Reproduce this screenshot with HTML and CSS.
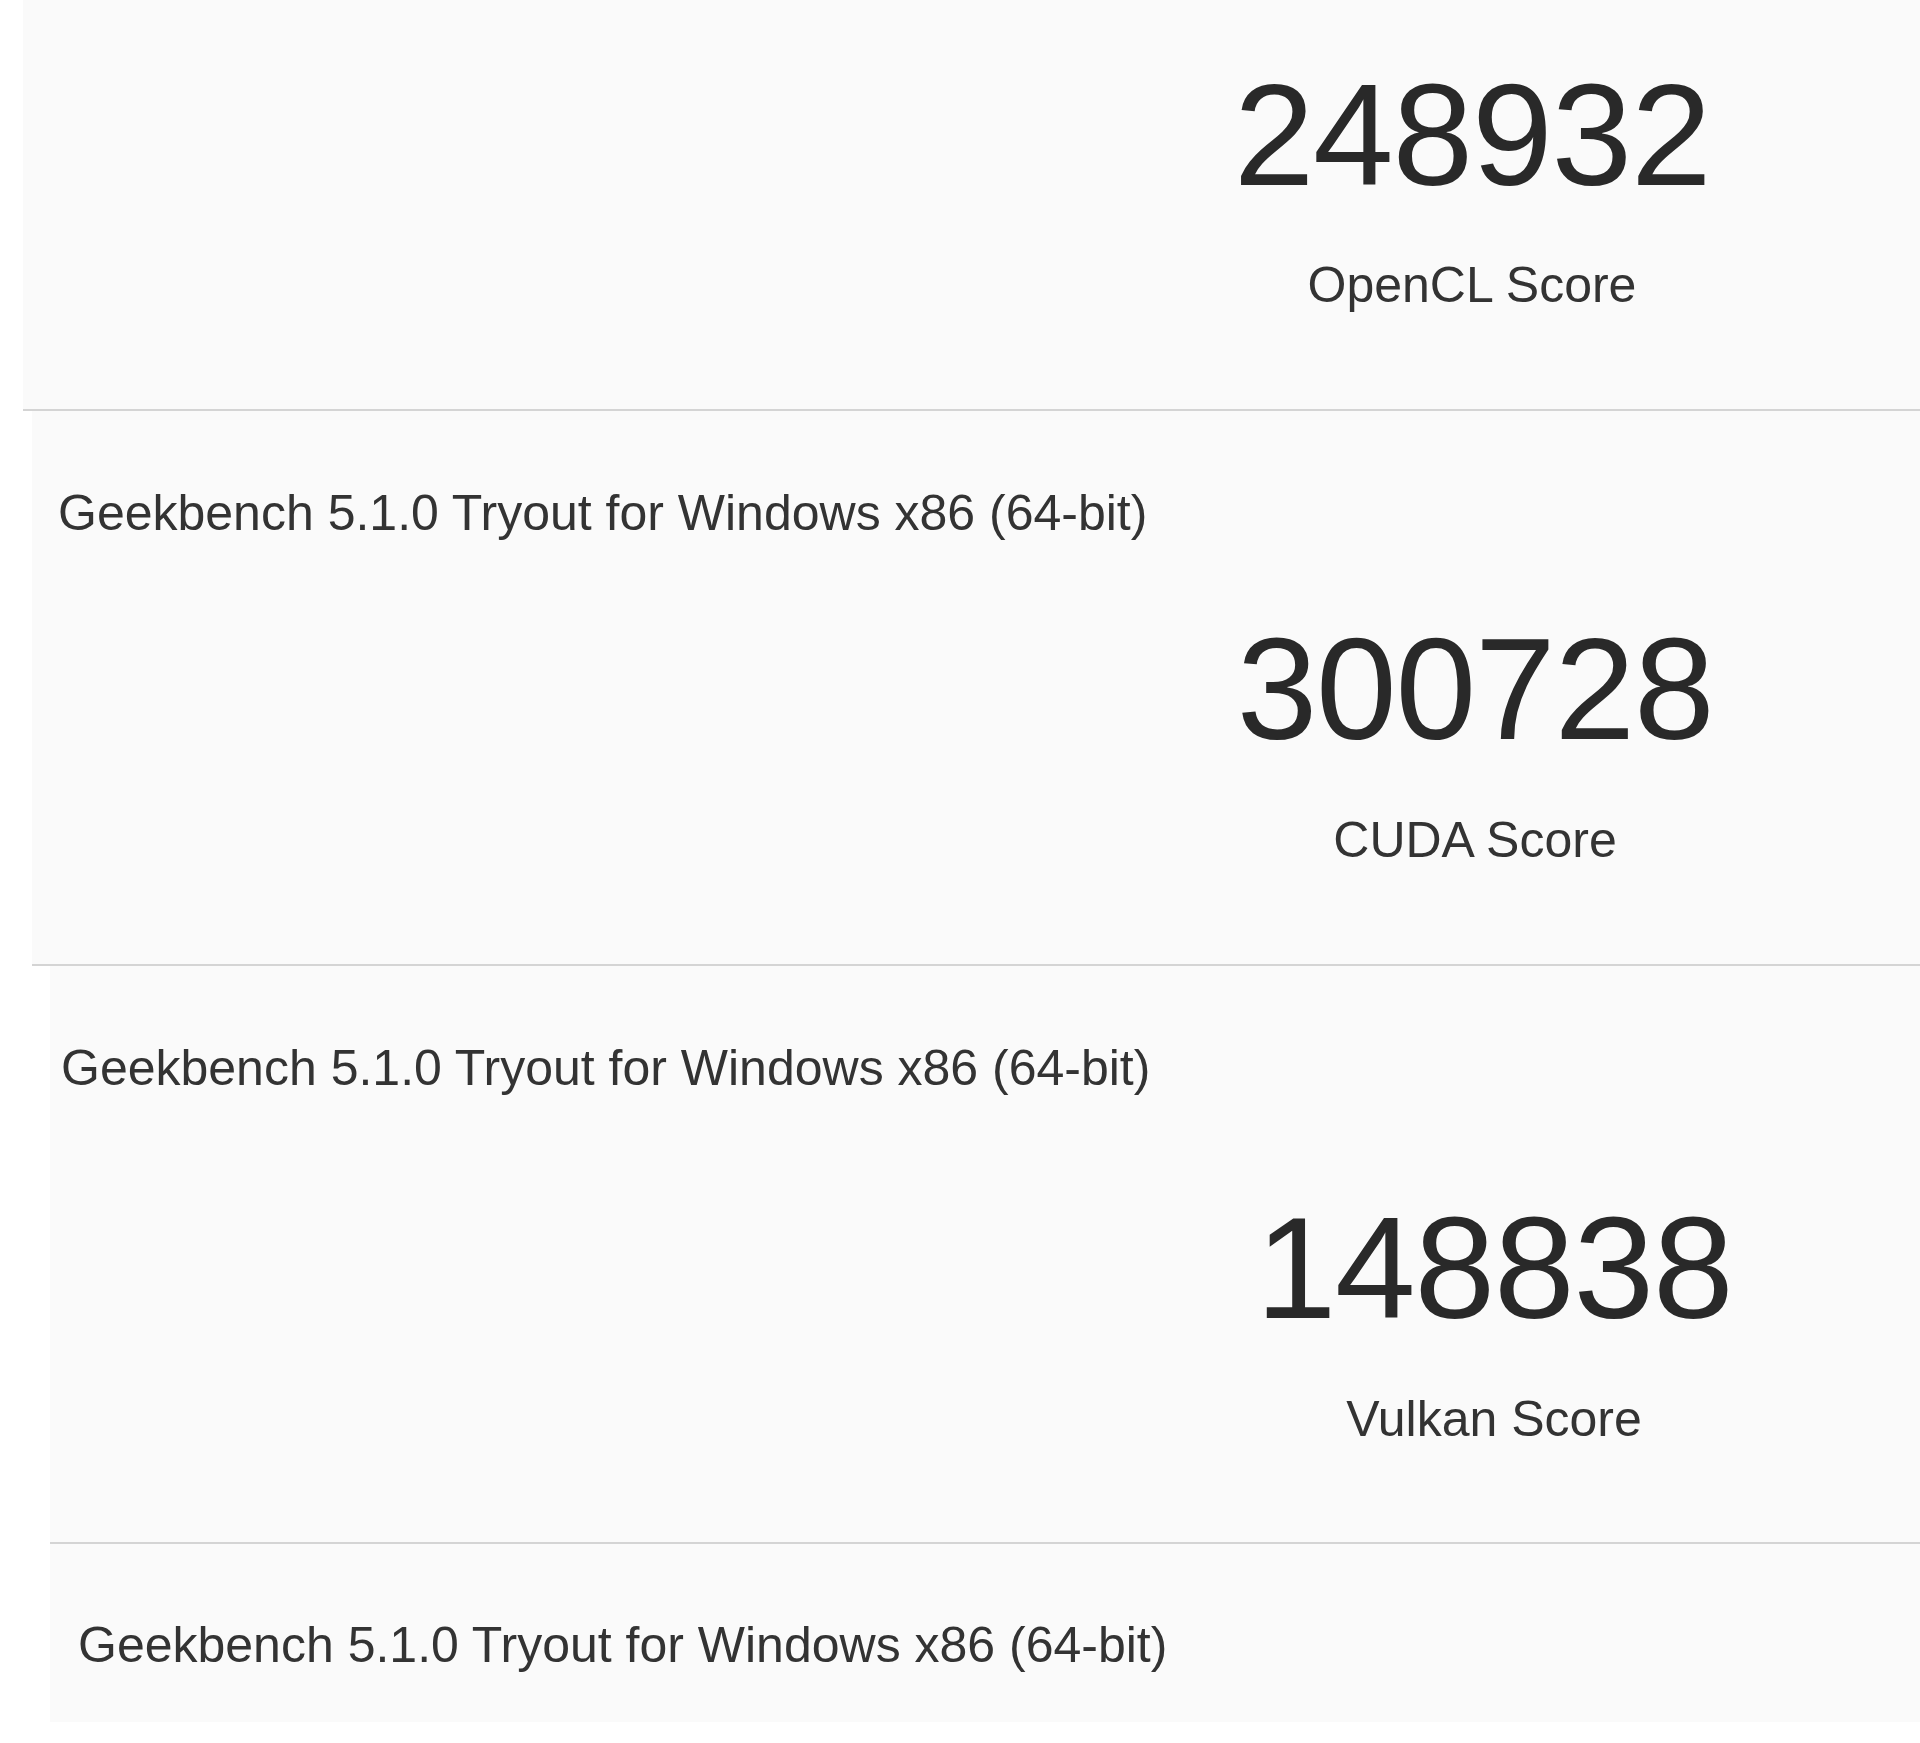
FILE: index.html
```html
<!DOCTYPE html>
<html lang="en">

<head>
	<meta charset="UTF-8">
	<meta name="viewport"
		content="width=device-width,
				initial-scale=1.0">
	<title>Geekbench Compute Results</title>
	<link rel="stylesheet" href="styles.css">
</head>

<body>
	<div class="results">
		<div class="result result-opencl">
			<div class="score">
				<div class="score-value">248932</div>
				<div class="score-name">OpenCL Score</div>
			</div>
		</div>

		<div class="result result-cuda">
			<div class="result-title">Geekbench 5.1.0 Tryout for Windows x86 (64-bit)</div>
			<div class="score">
				<div class="score-value">300728</div>
				<div class="score-name">CUDA Score</div>
			</div>
		</div>

		<div class="result result-vulkan">
			<div class="result-title">Geekbench 5.1.0 Tryout for Windows x86 (64-bit)</div>
			<div class="score">
				<div class="score-value">148838</div>
				<div class="score-name">Vulkan Score</div>
			</div>
		</div>

		<div class="result result-last">
			<div class="result-title">Geekbench 5.1.0 Tryout for Windows x86 (64-bit)</div>
		</div>
	</div>
</body>

</html>
```

FILE: styles.css
```css
* {
	margin: 0;
	padding: 0;
	box-sizing: content-box;
}

body {
	background: #fff;
	font-family: "Liberation Sans", Arial, Helvetica, sans-serif;
	color: #333;
	overflow-x: hidden;
}

.results {
	display: flex;
	flex-direction: column;
}

.result {
	background: #fafafa;
	border-bottom: 2px solid #d4d4d4;
	display: flex;
	flex-direction: column;
}

.result-title {
	font-size: 50px;
	line-height: 50px;
	white-space: nowrap;
	padding-left: 1px;
}

.score {
	width: 700px;
	margin-left: 1095px;
	text-align: center;
}

.score-value {
	font-size: 145px;
	line-height: 145px;
	letter-spacing: -1.2px;
	color: #292929;
}

.score-name {
	font-size: 50px;
	line-height: 50px;
	margin-top: 52px;
}

/* each block sits a little further in than the one above */
.result-opencl {
	margin-left: 23px;
	padding: 63px 0 99px;
}

.result-opencl .score {
	margin-left: 1099px;
}

.result-cuda {
	margin-left: 32px;
	padding: 77px 0 99px 25px;
}

.result-cuda .score {
	margin-left: 1068px;
}

.result-cuda .score-value {
	margin-top: 79px;
}

.result-cuda .score-name {
	margin-top: 53px;
}

.result-vulkan {
	margin-left: 50px;
	padding: 77px 0 98px 10px;
}

.result-vulkan .score {
	margin-left: 1084px;
}

.result-vulkan .score-value {
	margin-top: 103px;
}

.result-vulkan .score-name {
	margin-top: 53px;
}

.result-last {
	margin-left: 50px;
	padding: 76px 0 52px 27px;
	border-bottom: none;
}
```
